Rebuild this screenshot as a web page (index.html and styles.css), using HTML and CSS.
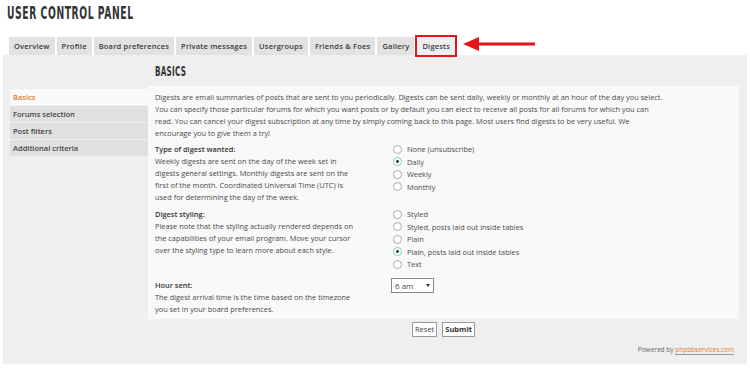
FILE: index.html
```html
<!DOCTYPE html>
<html lang="en">
<head>
  <meta charset="UTF-8" />
  <title>User Control Panel - Digests</title>
  <link rel="stylesheet" href="styles.css">
</head>
<body>

  <h1 class="page-title"><span>User Control Panel</span></h1>

  <div class="tabs">
    <a class="tab">Overview</a>
    <a class="tab">Profile</a>
    <a class="tab">Board preferences</a>
    <a class="tab">Private messages</a>
    <a class="tab">Usergroups</a>
    <a class="tab">Friends &amp; Foes</a>
    <a class="tab">Gallery</a>
    <a class="tab active">Digests</a>
    <svg class="arrow" width="72" height="14" viewBox="0 0 72 14">
      <line x1="14" y1="7" x2="72" y2="7" stroke="#e8141b" stroke-width="3"/>
      <polygon points="0,7 16,0 16,14" fill="#e8141b"/>
    </svg>
  </div>

  <div class="panel">
    <ul class="side-menu">
      <li class="current">Basics</li>
      <li>Forums selection</li>
      <li>Post filters</li>
      <li>Additional criteria</li>
    </ul>

    <div class="main">
      <h2 class="section-title"><span>Basics</span></h2>
      <div class="content">
        <p class="intro">Digests are email summaries of posts that are sent to you periodically. Digests can be sent daily, weekly or monthly at an hour of the day you select. You can specify those particular forums for which you want posts or by default you can elect to receive all posts for all forums for which you can read. You can cancel your digest subscription at any time by simply coming back to this page. Most users find digests to be very useful. We encourage you to give them a try!</p>

        <dl class="field">
          <dt>
            <label>Type of digest wanted:</label>
            <span>Weekly digests are sent on the day of the week set in digests general settings. Monthly digests are sent on the first of the month. Coordinated Universal Time (UTC) is used for determining the day of the week.</span>
          </dt>
          <dd>
            <label><input type="radio" name="type"> None (unsubscribe)</label>
            <label><input type="radio" name="type" checked> Daily</label>
            <label><input type="radio" name="type"> Weekly</label>
            <label><input type="radio" name="type"> Monthly</label>
          </dd>
        </dl>

        <dl class="field">
          <dt>
            <label>Digest styling:</label>
            <span>Please note that the styling actually rendered depends on the capabilities of your email program. Move your cursor over the styling type to learn more about each style.</span>
          </dt>
          <dd>
            <label><input type="radio" name="style"> Styled</label>
            <label><input type="radio" name="style"> Styled, posts laid out inside tables</label>
            <label><input type="radio" name="style"> Plain</label>
            <label><input type="radio" name="style" checked> Plain, posts laid out inside tables</label>
            <label><input type="radio" name="style"> Text</label>
          </dd>
        </dl>

        <dl class="field last">
          <dt>
            <label>Hour sent:</label>
            <span>The digest arrival time is the time based on the timezone you set in your board preferences.</span>
          </dt>
          <dd>
            <div class="select">6 am <span class="caret"></span></div>
          </dd>
        </dl>
      </div>

      <div class="buttons">
        <button class="btn">Reset</button>
        <button class="btn bold">Submit</button>
      </div>

      <p class="powered">Powered by <a>phpbbservices.com</a></p>
    </div>
  </div>

</body>
</html>
```

FILE: styles.css
```css
body {
  margin: 0;
  padding: 0 3px;
  font-family: "Open Sans", "DejaVu Sans", sans-serif;
  font-size: 7.4px;
  color: #4a4a4a;
  background: #fff;
}
.page-title {
  margin: 0;
  padding: 2px 0 0 4px;
  height: 30px;
  box-sizing: border-box;
  font-family: "DejaVu Sans Condensed", "Liberation Sans Narrow", sans-serif;
  font-weight: bold;
  font-size: 18px;
  letter-spacing: 1px;
  text-transform: uppercase;
  color: #333;
}
.page-title span,
.section-title span {
  display: inline-block;
  transform: scaleX(0.57);
  transform-origin: left center;
  white-space: nowrap;
}
.tabs {
  position: relative;
  display: flex;
  gap: 2px;
  padding: 6px 0 0 6px;
  height: 25px;
  box-sizing: border-box;
  align-items: flex-end;
}
.tab {
  background: #e2e2e2;
  color: #3a3a3a;
  font-weight: 600;
  font-size: 7.5px;
  letter-spacing: 0.2px;
  padding: 0 5px;
  height: 18px;
  line-height: 18px;
}
.tab.active {
  background: #efefef;
  outline: 2px solid #e8141b;
  outline-offset: 0;
  margin-left: 1px;
}
.arrow {
  position: absolute;
  left: 460px;
  top: 7px;
}
.panel {
  display: flex;
  background: #efefef;
  min-height: 309px;
}
.side-menu {
  list-style: none;
  margin: 34px 0 0 7px;
  padding: 0;
  width: 138px;
}
.side-menu li {
  background: #e0e0e0;
  color: #444;
  font-weight: 600;
  font-size: 7.5px;
  height: 16px;
  line-height: 16px;
  padding-left: 3px;
  margin-bottom: 1px;
}
.side-menu li.current {
  background: #fafafa;
  color: #e57a2a;
}
.main {
  flex: 1;
  margin-right: 8px;
}
.section-title {
  margin: 0;
  padding: 8px 0 0 7px;
  height: 31px;
  box-sizing: border-box;
  font-family: "DejaVu Sans Condensed", "Liberation Sans Narrow", sans-serif;
  font-weight: bold;
  font-size: 14px;
  letter-spacing: 0.5px;
  text-transform: uppercase;
  color: #333;
}
.content {
  background: #f9f9f9;
  padding: 5px 7px 4px 7px;
}
.intro {
  margin: 0 0 4px 0;
  max-width: 509px;
  line-height: 12px;
}
.field {
  display: flex;
  margin: 0 0 5px 0;
}
.field.last {
  margin: 8px 0 0 0;
}
.field dt {
  width: 236px;
  line-height: 12px;
}
.field dt span {
  display: block;
  max-width: 205px;
}
.field dt label {
  display: block;
  font-weight: 600;
  color: #333;
}
.field dd {
  margin: 0;
  display: flex;
  flex-direction: column;
}
.field dd label {
  display: flex;
  align-items: center;
  gap: 5px;
  height: 12.5px;
}
input[type="radio"] {
  appearance: none;
  width: 9px;
  height: 9px;
  margin: 0 0 0 2px;
  border: 1px solid #aaa;
  border-radius: 50%;
  background: #fff;
  box-sizing: border-box;
}
input[type="radio"]:checked {
  border-color: #7ccfc2;
  background: radial-gradient(circle, #333 1.2px, #fff 1.6px);
}
.select {
  position: relative;
  width: 43px;
  height: 15px;
  line-height: 14px;
  border: 1px solid #888;
  background: #fff;
  padding-left: 3px;
  box-sizing: border-box;
  font-size: 8px;
  margin-top: -1px;
}
.caret {
  position: absolute;
  right: 3px;
  top: 5px;
  border-left: 2px solid transparent;
  border-right: 2px solid transparent;
  border-top: 3px solid #333;
}
.buttons {
  display: flex;
  justify-content: center;
  gap: 5px;
  padding: 3px 0 0 0;
}
.btn {
  font-family: inherit;
  font-size: 7.5px;
  color: #444;
  background: #fff;
  border: 1px solid #999;
  padding: 0 2px;
  height: 15px;
}
.btn.bold {
  font-weight: bold;
  color: #333;
}
.powered {
  text-align: right;
  margin: 8px 5px 0 0;
  font-size: 6.5px;
  color: #666;
}
.powered a {
  color: #e57a2a;
  border-bottom: 1px solid #999;
}
```
